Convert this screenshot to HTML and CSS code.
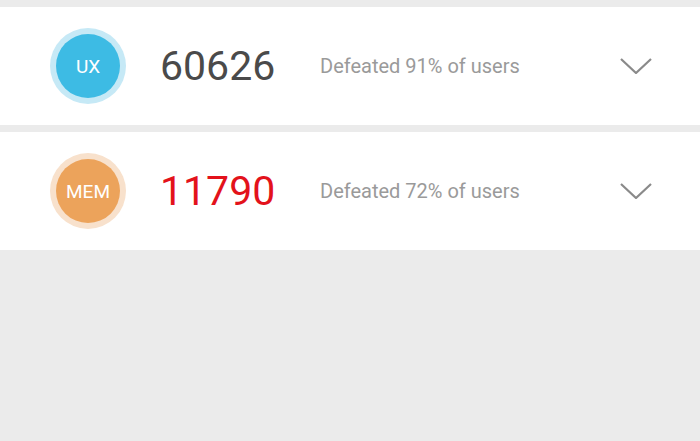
FILE: index.html
```html
<!DOCTYPE html>
<html>
<head>
<meta charset="utf-8">
<link rel="stylesheet" href="styles.css">
</head>
<body>
<div class="list">
  <div class="card">
    <div class="badge badge-ux"><span>UX</span></div>
    <div class="score">60626</div>
    <div class="desc">Defeated 91% of users</div>
    <svg class="chev" width="32" height="16" viewBox="0 0 32 16"><path d="M1 1 L16 15 L31 1" fill="none" stroke="#8a8a8a" stroke-width="2.2"/></svg>
  </div>
  <div class="card">
    <div class="badge badge-mem"><span>MEM</span></div>
    <div class="score score-red">11790</div>
    <div class="desc">Defeated 72% of users</div>
    <svg class="chev" width="32" height="16" viewBox="0 0 32 16"><path d="M1 1 L16 15 L31 1" fill="none" stroke="#8a8a8a" stroke-width="2.2"/></svg>
  </div>
</div>
</body>
</html>
```
FILE: styles.css
```css
html, body {
  margin: 0;
  padding: 0;
  background: #ebebeb;
  font-family: Roboto, "Noto Sans", sans-serif;
}
.list {
  padding-top: 7px;
  display: flex;
  flex-direction: column;
  gap: 7px;
}
.card {
  background: #ffffff;
  height: 118px;
  display: flex;
  align-items: center;
  padding: 0 48px 0 50px;
}
.badge {
  width: 76px;
  height: 76px;
  border-radius: 50%;
  display: flex;
  align-items: center;
  justify-content: center;
  box-sizing: border-box;
  flex: none;
}
.badge span {
  width: 64px;
  height: 64px;
  border-radius: 50%;
  display: flex;
  align-items: center;
  justify-content: center;
  color: #ffffff;
  font-size: 19px;
}
.badge-ux { background: #c6e9f6; }
.badge-ux span { background: #3dbbe4; }
.badge-mem { background: #f8e1cc; }
.badge-mem span { background: #eca35b; }
.score {
  margin-left: 34px;
  width: 160px;
  font-size: 41px;
  color: #4a4a4a;
  flex: none;
}
.score-red { color: #e3121b; }
.desc {
  font-size: 20px;
  color: #9a9a9a;
}
.chev {
  margin-left: auto;
  display: block;
}
```
